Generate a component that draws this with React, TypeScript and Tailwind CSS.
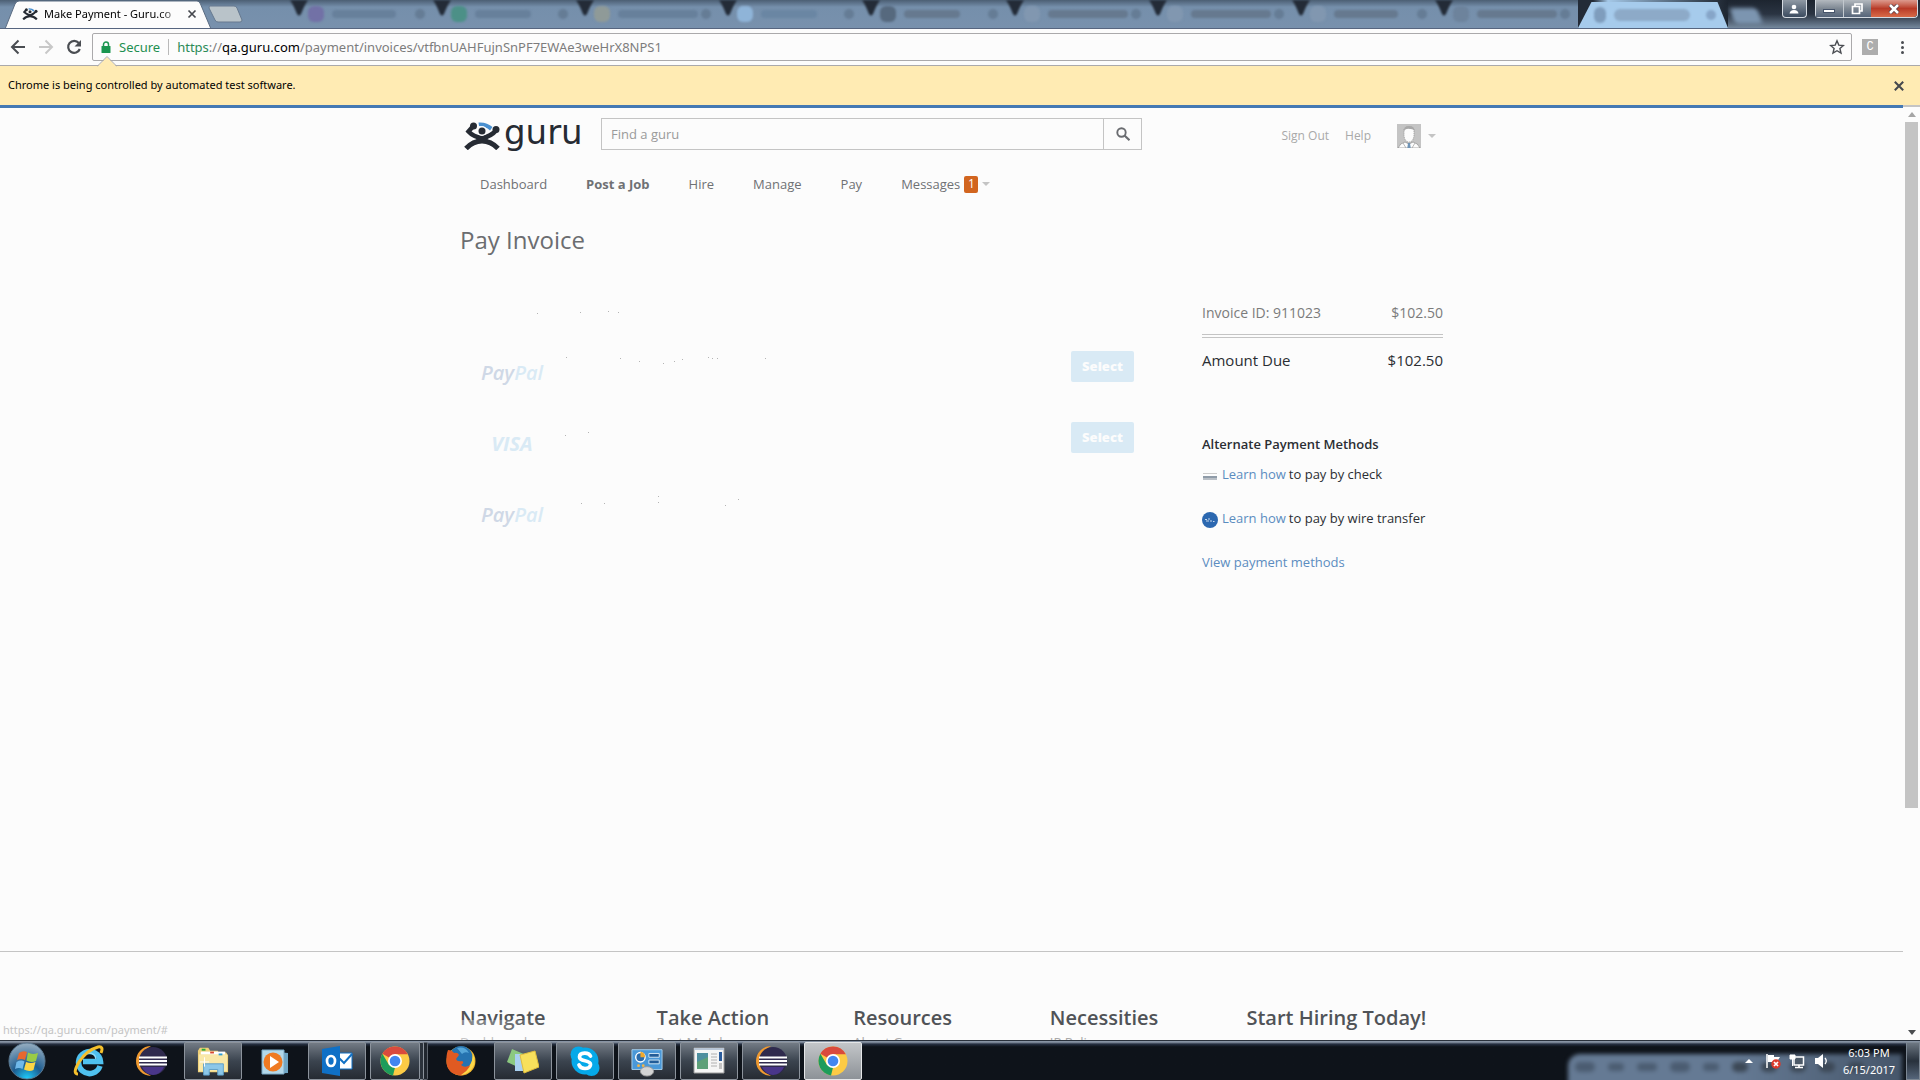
import React from "react";
import type { ReactNode } from "react";

const blurredTabs = [
  { icon: "bg-[#7271a6]", text: "w-16", ink: "bg-[#67809b]" },
  { icon: "bg-[#4c9087]", text: "w-14", ink: "bg-[#67809b]" },
  { icon: "bg-[#8f9a98]", text: "w-20", ink: "bg-[#67809b]" },
  { icon: "bg-[#8fb4d8]", text: "w-14", ink: "bg-[#6a86a3]" },
  { icon: "bg-[#56697e]", text: "w-14", ink: "bg-[#66798f]" },
  { icon: "bg-[#8197b0]", text: "w-20", ink: "bg-[#66798f]" },
  { icon: "bg-[#8197b0]", text: "w-20", ink: "bg-[#66798f]" },
  { icon: "bg-[#8197b0]", text: "w-16", ink: "bg-[#66798f]" },
  { icon: "bg-[#6d839c]", text: "w-20", ink: "bg-[#66798f]" },
];

function GuruFigure({ className }: { className: string }) {
  return (
    <svg viewBox="0 0 36 28" className={className} aria-hidden="true">
      <path d="M14.500 .5C20 0 25 2 28.500 5L26 8.500C23 5.500 19 4 15 4Z" fill="#4a90d0" />
      <g fill="none" stroke="#262b33" strokeLinecap="round">
        <path d="M8 5.500L4.500 9.500Q9 14.500 18 16Q27 14.500 32 8.500" strokeWidth="4.500" />
        <path d="M2 26.500Q9 19 18 19Q27 19 34 26.500" strokeWidth="5" strokeLinecap="butt" />
      </g>
      <path d="M12 14h12l-1 6H13z" fill="#262b33" />
      <circle cx="9.500" cy="4" r="3.500" fill="#262b33" />
      <circle cx="32" cy="7.500" r="3.500" fill="#262b33" />
      <circle cx="18" cy="9" r="5" fill="#fcfcfc" />
      <circle cx="18" cy="9" r="3.500" fill="#262b33" />
    </svg>
  );
}

function Cross({ className }: { className: string }) {
  return (
    <svg viewBox="0 0 10 10" className={className} aria-hidden="true">
      <path d="M1.500 1.500l7 7M8.500 1.500l-7 7" stroke="#45484e" strokeWidth="1.700" />
    </svg>
  );
}

function Caret() {
  return (
    <svg viewBox="0 0 8 4" className="h-1 w-2" aria-hidden="true">
      <path d="M0 0h8L4 4z" fill="#c4c4c4" />
    </svg>
  );
}

function TabStrip() {
  return (
    <div className="flex h-[29px] shrink-0 items-stretch overflow-hidden border-b border-[#56657f] bg-linear-to-b from-[#4c5f74] via-[#758fab] via-25% to-[#7891ad]">
      <div className="relative flex w-[216px] shrink-0 items-center gap-1.5 pl-[22px]">
        <svg viewBox="0 0 216 29" className="absolute inset-0 h-[29px] w-[216px]" aria-hidden="true">
          <path d="M5 29L15 4Q16.500 1 19 1H197Q199.500 1 200.500 4L211 29Z" fill="#fcfcfc" stroke="#5a6c82" />
        </svg>
        <GuruFigure className="relative h-3 w-4" />
        <span className="relative w-[134px] whitespace-nowrap bg-linear-to-r from-black from-84% to-[#c8c8c8] bg-clip-text font-[Noto_Sans] text-[11px] leading-4 text-transparent">
          Make Payment - Guru.co
        </span>
        <button aria-label="Close tab" className="relative flex size-4 items-center justify-center">
          <Cross className="size-2.5" />
        </button>
      </div>
      <button aria-label="New tab" className="-ml-2 flex w-9 shrink-0 items-center">
        <svg viewBox="0 0 36 18" className="h-[18px] w-9" aria-hidden="true">
          <path d="M2 1H26Q28 1 29 3L34 15Q34 17 32 17H10Q8 17 7 15L1 3Q1 1 2 1Z" fill="#b9c3c9" stroke="#66798f" />
        </svg>
      </button>
      <div className="w-[46px] shrink-0" />
      {blurredTabs.map((tab, i) => (
        <div key={i} className="flex min-w-0 flex-[143] items-center">
          <svg viewBox="0 0 18 28" className="h-7 w-[18px] shrink-0 self-start blur-[1px]" aria-hidden="true">
            <path d="M0 0H18Q15 4 11 14Q9 17 7 14Q3 4 0 0Z" fill="#232b37" />
          </svg>
          <span className={`h-4 w-4 shrink-0 rounded-md blur-[1px] ${tab.icon}`} />
          <span className={`ml-2 h-2 shrink-0 rounded-full blur-[1px] ${tab.text} ${tab.ink}`} />
          <span className="mr-2 ml-auto h-2.5 w-2.5 shrink-0 rounded-full bg-[#657c95] blur-[1px]" />
        </div>
      ))}
      <div className="flex w-[150px] shrink-0 items-end bg-linear-to-r from-[#232b37] from-10% via-[#a4c8e8] via-20% to-[#1d2530]">
        <div className="flex h-[26px] w-full items-center gap-2 rounded-t-md bg-[#a6cbec] pl-4 [clip-path:polygon(9%_0,93%_0,100%_100%,0_100%)]">
          <span className="h-4 w-3 rounded-full bg-[#7f9dbd] blur-[1px]" />
          <span className="h-3 w-[76px] rounded-full bg-[#8daac8] blur-[1px]" />
          <span className="ml-2 size-2.5 rounded-full bg-[#86a5c8] blur-[1px]" />
        </div>
      </div>
      <div className="flex w-[192px] shrink-0 items-start bg-linear-to-b from-[#1d2530] via-[#2a3442] to-[#75899e] pr-0.5">
        <span className="mt-2 ml-1 h-4 w-7 -skew-x-[-20deg] rounded bg-[#7c95b0] blur-[2px]" />
        <button aria-label="Profile" className="ml-auto flex h-[18px] w-[25px] items-center justify-center rounded-b border border-t-0 border-[#d5dbe2] bg-linear-to-b from-[#8f99a4] to-[#3c4c60]">
          <svg viewBox="0 0 10 10" className="size-2.5" aria-hidden="true">
            <circle cx="5" cy="3" r="2.300" fill="#fff" />
            <path d="M0.500 9.500Q1 6 5 6T9.500 9.500Z" fill="#fff" />
          </svg>
        </button>
        <div className="ml-2 flex h-[18px] rounded-b border border-t-0 border-[#d5dbe2]">
          <button aria-label="Minimize" className="flex w-7 items-end justify-center border-r border-[#c2c8ce] bg-linear-to-b from-[#b3b9bf] via-[#7e8893] to-[#56657a] pb-1">
            <span className="h-1 w-3 border border-[#46546a] bg-white" />
          </button>
          <button aria-label="Restore" className="flex w-[27px] items-center justify-center bg-linear-to-b from-[#b3b9bf] via-[#7e8893] to-[#56657a]">
            <svg viewBox="0 0 12 12" className="size-3" aria-hidden="true">
              <path d="M4 3V1h7v7H9M1.500 3.500h7v7h-7z" fill="none" stroke="#fff" strokeWidth="1.700" />
            </svg>
          </button>
          <button aria-label="Close window" className="flex w-[46px] items-center justify-center rounded-br bg-linear-to-b from-[#dc9a8e] via-[#b83a27] to-[#d86a48]">
            <svg viewBox="0 0 12 10" className="h-2.5 w-3" aria-hidden="true">
              <path d="M2 1l8 8M10 1L2 9" stroke="#4b3440" strokeWidth="4" />
              <path d="M2 1l8 8M10 1L2 9" stroke="#fff" strokeWidth="2.600" />
            </svg>
          </button>
        </div>
      </div>
    </div>
  );
}

function Toolbar() {
  return (
    <div className="flex h-[37px] shrink-0 items-center border-b border-[#aaa9ab] bg-[#fcfcfc] pr-2.5 pl-2.5">
      <div className="flex w-[82px] shrink-0 items-center gap-3">
        <button aria-label="Back">
          <svg viewBox="0 0 16 16" className="size-4" fill="none" stroke="#4a4d52" strokeWidth="2" aria-hidden="true">
            <path d="M15 8H2.500M8.500 1.500L2 8l6.500 6.500" />
          </svg>
        </button>
        <button aria-label="Forward">
          <svg viewBox="0 0 16 16" className="size-4" fill="none" stroke="#c8c8c8" strokeWidth="2" aria-hidden="true">
            <path d="M1 8h12.500M7.500 1.500L14 8l-6.500 6.500" />
          </svg>
        </button>
        <button aria-label="Reload">
          <svg viewBox="0 0 16 16" className="size-4" aria-hidden="true">
            <path d="M12.800 4A6 6 0 1 0 13.800 10" fill="none" stroke="#4a4d52" strokeWidth="2.200" />
            <path d="M15 1v6.500H8.500z" fill="#4a4d52" />
          </svg>
        </button>
      </div>
      <div className="relative flex h-7 min-w-0 flex-1 items-center rounded-xs border border-[#aaa9ab] pl-2 font-[Noto_Sans] text-[13px] leading-5">
        <svg viewBox="0 0 10 12" className="h-3 w-2.5" aria-hidden="true">
          <path d="M2.500 6V3.500a2.500 2.500 0 0 1 5 0V6" fill="none" stroke="#1a9650" strokeWidth="1.500" />
          <rect x="0.500" y="5" width="9" height="7" rx="0.500" fill="#1a9650" />
        </svg>
        <span className="ml-2 text-[#1d8f50]">Secure</span>
        <span className="mx-2 h-4 w-px bg-[#b9b9b9]" />
        <div aria-label="Address" className="flex-1 whitespace-nowrap text-[#7c7c7c]">
          <span className="text-[#2b8a57]">https</span>://<span className="text-black">qa.guru.com</span>
          /payment/invoices/vtfbnUAHFujnSnPF7EWAe3weHrX8NPS1
        </div>
        <button aria-label="Bookmark" className="mr-1.5">
          <svg viewBox="0 0 16 16" className="size-4" aria-hidden="true">
            <path d="M8 1.800l1.800 4.300 4.600.4-3.500 3 1.100 4.600L8 11.700l-4 2.400 1.100-4.600-3.500-3 4.600-.4z" fill="none" stroke="#4a4d52" strokeWidth="1.400" />
          </svg>
        </button>
        <svg viewBox="0 0 20 12" className="absolute top-[22px] left-1 z-10 h-3 w-5" aria-hidden="true">
          <path d="M0 11L10 1L20 11V12H0Z" fill="#ffebb3" />
          <path d="M0 10.500L10 .5L20 10.500" fill="none" stroke="#aaa9ab" />
        </svg>
      </div>
      <button aria-label="Extension" className="ml-2.5 flex h-4 w-4 items-center justify-center bg-[#adadad] font-[Liberation_Mono] text-[12px] leading-3 text-white">
        C
      </button>
      <button aria-label="Menu" className="ml-4 flex w-4 flex-col items-center gap-0.5">
        <span className="size-[3px] rounded-full bg-[#4a4d52]" />
        <span className="size-[3px] rounded-full bg-[#4a4d52]" />
        <span className="size-[3px] rounded-full bg-[#4a4d52]" />
      </button>
    </div>
  );
}

function SiteHeader() {
  return (
    <header>
      <div className="flex items-start">
        <a href="#home" aria-label="Guru home" className="flex h-[42px] w-[141px] shrink-0 items-start gap-1 pt-3 pl-1">
          <GuruFigure className="mt-0.5 h-7 w-9" />
          <span className="font-[DejaVu_Sans] text-[34px] leading-6 text-[#262b33]">guru</span>
        </a>
        <form className="mt-2.5 flex w-[541px]" onSubmit={(e) => e.preventDefault()}>
          <input
            aria-label="Find a guru"
            placeholder="Find a guru"
            className="h-8 min-w-0 flex-1 border border-[#c4c4c4] px-[9px] text-[13px] text-[#6a6d70] placeholder:text-[#9a9a9a]"
          />
          <button aria-label="Search" className="flex h-8 w-[38px] items-center justify-center border border-l-0 border-[#c4c4c4]">
            <svg viewBox="0 0 14 14" className="size-3.5" fill="none" stroke="#6a6c70" aria-hidden="true">
              <circle cx="5.500" cy="5.500" r="4.200" strokeWidth="1.900" />
              <path d="M8.500 8.500l5 4.700" strokeWidth="2.200" />
            </svg>
          </button>
        </form>
        <div className="mt-4 ml-auto flex items-center gap-4 pr-[7px] text-[12px] leading-6 text-[#a9a9a9]">
          <a href="#sign-out">Sign Out</a>
          <a href="#help">Help</a>
          <button aria-label="Account" className="ml-2.5 flex items-center gap-[7px]">
            <svg viewBox="0 0 24 24" className="size-6" aria-hidden="true">
              <path d="M0 0h24v24H0z" fill="#c4c4c4" />
              <path d="M1 24Q3 19 8 18L12 20L16 18Q21 19 23 24Z" fill="#fcfcfc" stroke="#8a8a8a" strokeWidth=".7" />
              <path d="M7 6Q7 3 12 3T17 6V12Q16 18 12 18T7 12Z" fill="#fcfcfc" stroke="#999" strokeDasharray="1 1" />
              <path d="M7 7Q6.500 2 12 2T17.500 7Q16 4.500 13 5Q9 4 7 7Z" fill="#a8a8a8" />
              <path d="M11 19h2l.7 5h-3.400z" fill="#6f93b5" />
              <path d="M6 19l3 5M18 19l-3 5" stroke="#999" strokeWidth=".7" />
            </svg>
            <Caret />
          </button>
        </div>
      </div>
      <nav className="mt-6 flex items-center gap-[39px] pl-5 text-[13px] leading-5 text-[#6f7174]">
        <a href="#dashboard">Dashboard</a>
        <a href="#post" className="font-bold">Post a Job</a>
        <a href="#hire">Hire</a>
        <a href="#manage">Manage</a>
        <a href="#pay">Pay</a>
        <a href="#messages" className="flex items-center gap-1">
          Messages
          <span className="flex h-[17px] w-3.5 items-center justify-center rounded-xs bg-[#d2651f] text-[12px] text-white">1</span>
          <Caret />
        </a>
      </nav>
    </header>
  );
}

function PayPal() {
  return (
    <span className="font-[Open_Sans] text-[20px] leading-6 font-semibold text-[#d9eaf5] italic">
      <span className="text-[#cfd8e6]">Pay</span>Pal
    </span>
  );
}

function FadedSpecks({ points }: { points: number[][] }) {
  return (
    <svg viewBox="0 0 220 20" className="h-5 w-[220px]" shapeRendering="crispEdges" aria-hidden="true">
      {points.map(([x, y], i) => (
        <rect key={i} x={x} y={y} width="1" height="1" fill="#b4b4b4" />
      ))}
    </svg>
  );
}

function MethodRow({ logo, points, select }: { logo: ReactNode; points: number[][]; select?: boolean }) {
  return (
    <li className="flex h-[71px] items-start">
      <div className="flex w-[104px] justify-center pt-2.5">{logo}</div>
      <FadedSpecks points={points} />
      {select && (
        <button className="ml-auto h-[31px] w-[63px] rounded-xs bg-[#d9eaf5] text-[13px] font-extrabold text-[#fcfcfc]">
          Select
        </button>
      )}
    </li>
  );
}

function Summary() {
  return (
    <aside className="w-[241px] shrink-0 text-[13px] leading-5 text-[#2b2e33]">
      <dl>
        <div className="flex justify-between border-b-4 border-double border-[#c4c4c4] pb-[11px] text-[14px] text-[#7b7b7b]">
          <dt>Invoice ID: 911023</dt>
          <dd>$102.50</dd>
        </div>
        <div className="mt-3 flex justify-between text-[15px] font-medium">
          <dt>Amount Due</dt>
          <dd>$102.50</dd>
        </div>
      </dl>
      <h2 className="mt-16 font-semibold">Alternate Payment Methods</h2>
      <p className="mt-2.5 flex items-center">
        <svg viewBox="0 0 16 16" className="mr-1 size-4" aria-hidden="true">
          <path d="M1 7h14v1H1z" fill="#ccc" />
          <path d="M1 10h14v4H1z" fill="#b9bfc6" />
          <path d="M1 10h14v2H1z" fill="#8f9ba8" />
        </svg>
        <a href="#check" className="mr-[3px] text-[#5b8cc0]">Learn how</a>to pay by check
      </p>
      <p className="mt-6 flex items-center">
        <svg viewBox="0 0 16 16" className="mt-[3px] mr-1 size-4" aria-hidden="true">
          <circle cx="8" cy="8" r="8" fill="#2c68b0" />
          <path d="M3 7.500h2M6 7h2M4 9h3M8 9h2M11 9.500h1.500" stroke="#c5d6ea" />
        </svg>
        <a href="#wire" className="mr-[3px] text-[#5b8cc0]">Learn how</a>to pay by wire transfer
      </p>
      <a href="#methods" className="mt-6 block text-[#5b8cc0]">View payment methods</a>
    </aside>
  );
}

const footerColumns = [
  { title: "Navigate", link: "Dashboard" },
  { title: "Take Action", link: "Post My Job" },
  { title: "Resources", link: "About Guru" },
  { title: "Necessities", link: "IP Policy" },
  { title: "Start Hiring Today!", link: "" },
];

function Page() {
  return (
    <div className="flex min-h-0 flex-1 bg-[#fcfcfc]">
      <div className="relative flex min-w-0 flex-1 flex-col overflow-hidden border-t-3 border-[#4479b4] font-[Open_Sans]">
        <div className="mx-auto w-full max-w-[983px] flex-1">
          <SiteHeader />
          <h1 className="mt-7 text-[24px] leading-9 text-[#6b6d70]">Pay Invoice</h1>
          <main className="mt-[45px] flex justify-between">
            <section aria-label="Payment methods" className="w-[674px]">
              <div className="h-12 pl-14">
                <FadedSpecks points={[[21, 10], [64, 9], [92, 8], [102, 9]]} />
              </div>
              <ul>
                <MethodRow logo={<PayPal />} select points={[[2, 6], [56, 7], [75, 10], [99, 12], [110, 10], [118, 8], [144, 6], [148, 7], [153, 7], [201, 7]]} />
                <MethodRow
                  logo={<span className="font-[Open_Sans] text-[20px] leading-6 font-bold text-[#d9eaf5] italic">VISA</span>}
                  select
                  points={[[1, 13], [24, 10]]}
                />
                <MethodRow logo={<PayPal />} points={[[17, 10], [40, 10], [94, 3], [94, 9], [161, 12], [174, 6]]} />
              </ul>
            </section>
            <Summary />
          </main>
        </div>
        <footer className="h-[89px] shrink-0 border-t border-[#c4c4c4]">
          <div className="mx-auto grid max-w-[983px] grid-cols-5 pt-[52px]">
            {footerColumns.map((col) => (
              <div key={col.title} className="whitespace-nowrap">
                <h3 className="text-[20px] leading-7 font-semibold text-[#505357]">{col.title}</h3>
                <a href="#footer" className="block text-[13px] leading-5 text-[#a9a9a9]">{col.link}</a>
              </div>
            ))}
          </div>
        </footer>
        <div className="absolute bottom-0 left-0 h-5 w-[560px] bg-linear-to-r from-[#fcfcfc] from-50% to-transparent px-[3px] font-[Noto_Sans] text-[11px] leading-5 text-[#c4c4c4]">
          https://qa.guru.com/payment/#
        </div>
      </div>
      <div className="flex w-[17px] shrink-0 flex-col items-center justify-between border-t-2 border-[#c4c4c4] py-[5px]">
        <svg viewBox="0 0 8 5" className="h-[5px] w-2" aria-hidden="true"><path d="M4 0l4 5H0z" fill="#a5a5a5" /></svg>
        <div className="mt-[5px] w-[13px] grow-[684] bg-[#c4c4c4]" />
        <div className="grow-[221]" />
        <svg viewBox="0 0 8 5" className="h-[5px] w-2" aria-hidden="true"><path d="M4 5l4-5H0z" fill="#4b4d50" /></svg>
      </div>
    </div>
  );
}

const ico = "size-8";

const Eclipse = () => (
  <svg viewBox="0 0 32 32" className={ico} aria-hidden="true">
    <path d="M16 1A15 15 0 0 0 16 31A17 17 0 0 1 16 1Z" fill="#f09a30" />
    <circle cx="18" cy="16" r="14" fill="#2f2a4d" />
    <path d="M7 22Q10 29 18 30Q26 29 29 22Z" fill="#49368a" />
    <path d="M4 12.500h28M4 16h28M4 19.500h28" stroke="#fff" strokeWidth="2" />
  </svg>
);

const Chrome = () => (
  <svg viewBox="0 0 32 32" className={ico} aria-hidden="true">
    <circle cx="16" cy="16" r="14.500" fill="#fccb45" />
    <path d="M16 16L3.400 8.800A14.500 14.500 0 0 1 28.800 9.300H16Z" fill="#d94a3d" />
    <path d="M3.400 8.800L10 20L16 22.500L14 30.400A14.500 14.500 0 0 1 3.400 8.800Z" fill="#1d9c5b" />
    <circle cx="16" cy="16" r="7" fill="#fff" />
    <circle cx="16" cy="16" r="5.300" fill="#4286f0" />
  </svg>
);

const apps: { name: string; running?: boolean; active?: boolean; stacked?: boolean; icon: ReactNode }[] = [
  {
    name: "Internet Explorer",
    icon: (
      <svg viewBox="0 0 32 32" className={ico} aria-hidden="true">
        <path d="M27 21A11 11 0 1 1 27.500 16.500H10" fill="none" stroke="#4fc1ef" strokeWidth="5.500" />
        <path d="M9 14Q10 8 16 8T23 14" fill="none" stroke="#8edcf8" strokeWidth="1.500" />
        <path d="M5 29Q-1 29 6 17Q14 5 25 2Q31 1 28 8" fill="none" stroke="#f5c02c" strokeWidth="3" />
      </svg>
    ),
  },
  { name: "Eclipse", icon: <Eclipse /> },
  {
    name: "File Explorer",
    running: true,
    icon: (
      <svg viewBox="0 0 34 32" className={ico} aria-hidden="true">
        <path d="M1 28V5L3 2h9l2 3h8l1 2h8l2 3v18Z" fill="#efd078" />
        <path d="M2 9h30v18H2z" fill="#f9e8a8" />
        <path d="M4 6h26v3H4z" fill="#fff" />
        <path d="M5 3h4v2H5z" fill="#27ad3b" />
        <path d="M14 6h4v2h-4z" fill="#d8482e" />
        <path d="M23 8h4v2h-4z" fill="#2c9cd8" />
        <path d="M7 31V19H28V31H22V25H13V31Z" fill="#8cc7e8" stroke="#5c9ec8" />
        <path d="M8 12v10M3 17h10" stroke="#fff" />
      </svg>
    ),
  },
  {
    name: "Media Player",
    icon: (
      <svg viewBox="0 0 32 32" className={ico} aria-hidden="true">
        <path d="M8 6l21 2v20l-21 1z" fill="#6fa5c4" />
        <path d="M3 5h22v24H3z" fill="#b3d8ea" stroke="#7baac6" />
        <circle cx="14" cy="17" r="9.500" fill="#ef7a22" />
        <path d="M11 11l9 6-9 6z" fill="#fff" />
      </svg>
    ),
  },
  {
    name: "Outlook",
    running: true,
    icon: (
      <svg viewBox="0 0 32 32" className={ico} aria-hidden="true">
        <path d="M17 8h14v16H17z" fill="#fff" stroke="#1071c5" />
        <path d="M18 13l5 5 8-9" fill="none" stroke="#1071c5" strokeWidth="2" />
        <path d="M1 4L19 1V31L1 28Z" fill="#0f70c6" />
        <ellipse cx="10" cy="16" rx="4" ry="5" fill="none" stroke="#fff" strokeWidth="2.700" />
      </svg>
    ),
  },
  { name: "Chrome", running: true, stacked: true, icon: <Chrome /> },
  {
    name: "Firefox",
    icon: (
      <svg viewBox="0 0 32 32" className={ico} aria-hidden="true">
        <circle cx="16" cy="16" r="14.500" fill="#f0b52c" />
        <circle cx="16" cy="12.500" r="11.500" fill="#2573b0" />
        <path d="M12 3Q20 1 24 8Q20 6 17 9Z" fill="#55a6d8" />
        <path d="M3 5Q7 5 9 8Q13 7 14 10L11 14Q12 17 17 16Q20 17 16 20Q20 24 27 19Q26 28 17 30.500Q3 30 1.500 18Q1 10 3 5Z" fill="#e05a22" />
        <path d="M28 9Q32 18 26 25Q21 30 16 30Q27 24 28 9Z" fill="#fbd94a" />
      </svg>
    ),
  },
  {
    name: "Sticky Notes",
    running: true,
    icon: (
      <svg viewBox="0 0 32 32" className={ico} aria-hidden="true">
        <path d="M5 4L19 10L13 23L0 17Z" fill="#8cc980" />
        <path d="M8 9h14v17H8z" fill="#a9d0f0" />
        <path d="M13 10L28 6L32 22L17 28Z" fill="#f8e05c" stroke="#e0bd3d" />
      </svg>
    ),
  },
  {
    name: "Skype",
    running: true,
    icon: (
      <svg viewBox="0 0 32 32" className={ico} aria-hidden="true">
        <circle cx="16" cy="16" r="13.500" fill="#05a9e9" />
        <circle cx="9.500" cy="9.500" r="8" fill="#05a9e9" />
        <circle cx="22.500" cy="23" r="8" fill="#05a9e9" />
        <path d="M21.500 11Q20 8 15.500 8.200Q10.500 8.500 10.500 12Q10.500 14.700 16 15.700Q21.700 16.800 21.500 19.700Q21 23.500 16 23.500Q11.500 23.500 10 20" fill="none" stroke="#fff" strokeWidth="3.700" strokeLinecap="round" />
      </svg>
    ),
  },
  {
    name: "Control Panel",
    running: true,
    icon: (
      <svg viewBox="0 0 34 32" className={ico} aria-hidden="true">
        <path d="M1 4h32v21H1z" fill="#4a98d8" stroke="#a9d0ec" />
        <circle cx="10" cy="12" r="5" fill="#2b6cab" stroke="#fff" strokeWidth="1.500" />
        <path d="M10 12V6a6 6 0 0 1 5 6z" fill="#f0a92e" />
        <path d="M19 8h11v4H19zM19 15h11v4H19z" fill="#225c98" stroke="#d6ebf8" />
        <circle cx="8" cy="21" r="1.500" fill="#f5b544" />
        <circle cx="13" cy="21" r="1.500" fill="#f5b544" />
        <ellipse cx="17" cy="27" rx="7" ry="5" fill="#d4d4d4" stroke="#9a9a9a" />
      </svg>
    ),
  },
  {
    name: "Viewer",
    running: true,
    icon: (
      <svg viewBox="0 0 32 32" className={ico} aria-hidden="true">
        <path d="M1 3h30v25H1z" fill="#f5f5f5" stroke="#9b9b9b" />
        <path d="M1 3h30v2H1z" fill="#b9c6d6" />
        <path d="M4 8h11v16H4z" fill="#4f8f9f" />
        <path d="M4 17l11-5v12H4z" fill="#5ea078" />
        <path d="M18 9h6M18 12h6M18 15h6M18 18h6M18 21h6" stroke="#b0b0b0" />
        <path d="M26 7h3v9h-3z" fill="#2b5c9c" />
        <path d="M26 18h3v6h-3z" fill="#c2c2c2" />
      </svg>
    ),
  },
  { name: "Eclipse workspace", running: true, icon: <Eclipse /> },
  { name: "Chrome test window", running: true, active: true, icon: <Chrome /> },
];

function Taskbar() {
  return (
    <div className="flex h-10 shrink-0 items-center border-t border-[#2a323d] bg-linear-to-b from-[#8793a3] from-3% via-[#263041] via-8% to-[#0e131a] to-15%">
      <button aria-label="Start" className="flex w-[54px] shrink-0 justify-center">
        <svg viewBox="0 0 38 38" className="size-[38px]" aria-hidden="true">
          <defs>
            <radialGradient id="orb" cx="50%" cy="100%" r="95%">
              <stop offset="0" stopColor="#1fd0ff" />
              <stop offset=".45" stopColor="#1c5c90" />
              <stop offset="1" stopColor="#8ea8bd" />
            </radialGradient>
          </defs>
          <circle cx="19" cy="19" r="18" fill="url(#orb)" stroke="#5a7890" />
          <path d="M11 11Q15 8 19 10L17 18Q13 16 9 18Z" fill="#e8682f" />
          <path d="M20 10.500Q24 13 30 11L28 19Q23 21 18.500 18.500Z" fill="#9acb45" />
          <path d="M8.500 20Q13 17.500 16.500 19.500L14.500 27Q11 25 7 27Z" fill="#6fb9ea" />
          <path d="M18 20Q23 22 27.500 20L25.500 28Q21 30 16 27.500Z" fill="#fbd545" />
        </svg>
      </button>
      <div className="ml-1 flex">
        {apps.map((app) => (
          <div key={app.name} className="flex h-[38px] w-[62px] px-0.5">
            <button
              aria-label={app.name}
              className={
                app.active
                  ? "flex flex-1 items-center justify-center rounded-xs border border-[#e4e6e8] bg-linear-to-b from-[#c3c6c9] to-[#8d9297]"
                  : app.running
                    ? "flex flex-1 items-center justify-center rounded-xs border border-[#8c939c] bg-linear-to-b from-[#737b85] via-[#3b444f] via-50% to-[#262b33]"
                    : "flex flex-1 items-center justify-center"
              }
            >
              {app.icon}
            </button>
            {app.stacked && (
              <>
                <span className="w-1 rounded-r-xs border border-l-0 border-[#8c939c] bg-[#2b323b]" />
                <span className="w-1 rounded-r-xs border border-l-0 border-[#5c636c] bg-[#20262e]" />
              </>
            )}
          </div>
        ))}
      </div>
      <div className="ml-auto flex h-full w-[356px] items-center">
        <div className="relative flex h-full flex-1 items-center justify-end gap-2 overflow-hidden pr-[5px]">
          <div className="absolute inset-x-1 top-[13px] -bottom-2 flex items-center justify-around rounded-tl-xl bg-linear-to-r from-[#657a94] from-50% to-[#46566a] pr-8 pb-2 blur-[2px]">
            <span className="h-2.5 w-5 rounded-full bg-[#4b5c71]" />
            <span className="h-2 w-4 rounded-full bg-[#4b5c71]" />
            <span className="h-2 w-5 rounded-full bg-[#4b5c71]" />
            <span className="h-2.5 w-5 rounded-full bg-[#4b5c71]" />
            <span className="h-2 w-4 rounded-full bg-[#4b5c71]" />
            <span className="h-2.5 w-4 rounded-full bg-[#3c4856]" />
            <span className="h-2.5 w-4 rounded-full bg-[#3c4856]" />
            <span className="h-2.5 w-4 rounded-full bg-[#3c4856]" />
            <span className="h-2.5 w-4 rounded-full bg-[#3c4856]" />
            <span className="h-2.5 w-4 rounded-full bg-[#3c4856]" />
          </div>
          <button aria-label="Show hidden icons" className="relative mr-1">
            <svg viewBox="0 0 8 4" className="h-1 w-2" aria-hidden="true"><path d="M4 0l4 4H0z" fill="#fff" /></svg>
          </button>
          <svg viewBox="0 0 16 16" className="relative size-4" aria-label="Action center">
            <path d="M2 1v14" stroke="#fff" strokeWidth="1.500" />
            <path d="M3 2h6v2h6l-2 3 1 2H3z" fill="#fff" />
            <circle cx="11" cy="11" r="4.700" fill="#dc3a2c" />
            <path d="M9 9l4 4M13 9l-4 4" stroke="#fff" strokeWidth="1.700" />
          </svg>
          <svg viewBox="0 0 16 16" className="relative size-4" aria-label="Network">
            <path d="M5 4h9.500v8H5z" fill="#4d5a68" stroke="#fff" strokeWidth="1.500" />
            <path d="M6 14.500h8M10 12v2" stroke="#fff" strokeWidth="1.700" />
            <path d="M1 2h5v4H1zM3.500 6v7" fill="#fff" stroke="#fff" />
          </svg>
          <svg viewBox="0 0 16 16" className="relative size-4" aria-label="Volume">
            <path d="M2 5h3l5-4v14l-5-4H2z" fill="#fff" />
            <path d="M12 5q2.500 3 0 6" fill="none" stroke="#fff" strokeWidth="1.300" />
          </svg>
          <div className="relative w-16 text-center font-[Noto_Sans] text-[11px] leading-[17px] whitespace-nowrap text-white">
            6:03 PM
            <br />
            6/15/2017
          </div>
        </div>
        <button aria-label="Show desktop" className="h-[38px] w-[14px] border border-[#7c8793] bg-linear-to-b from-[#6d7782] via-[#28313c] to-[#55657a]" />
      </div>
    </div>
  );
}

export default function App() {
  return (
    <div className="flex h-screen flex-col overflow-hidden bg-[#fcfcfc]">
      <TabStrip />
      <Toolbar />
      <div className="flex h-[39px] shrink-0 items-center justify-between bg-[#ffebb3] pr-[15px] pl-2 font-[Noto_Sans] text-[11px] text-black">
        <span>Chrome is being controlled by automated test software.</span>
        <button aria-label="Dismiss" className="flex size-3 items-center justify-center">
          <Cross className="size-3" />
        </button>
      </div>
      <Page />
      <Taskbar />
    </div>
  );
}
